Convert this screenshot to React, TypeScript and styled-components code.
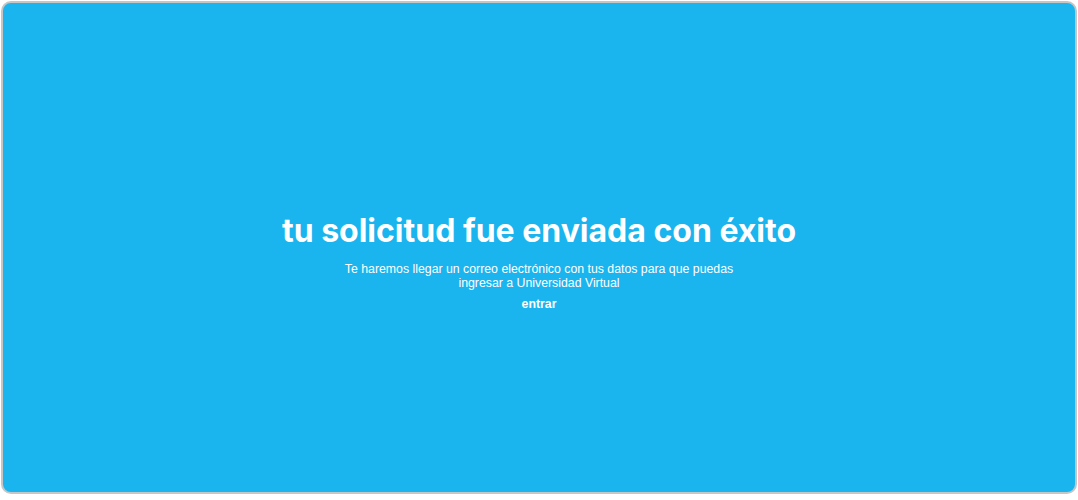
import React from "react";
import styled, { createGlobalStyle } from "styled-components";

const Global = createGlobalStyle`
  html, body { margin: 0; padding: 0; background: #ffffff; }
  * { box-sizing: border-box; }
`;

const Card = styled.main`
  margin: 1px;
  height: 493px;
  border: 2px solid #c6c6c6;
  border-radius: 10px;
  background: #1ab4ef;
  display: flex;
  flex-direction: column;
  align-items: center;
  padding-top: 206px;
  color: #ffffff;
`;

const Title = styled.h1`
  margin: 0;
  font-family: "Inter", sans-serif;
  font-weight: 700;
  font-size: 32px;
  line-height: 44px;
  letter-spacing: 0;
`;

const Message = styled.p`
  margin: 9px 0 0;
  max-width: 410px;
  text-align: center;
  font-family: "Liberation Sans", Arial, sans-serif;
  font-size: 12.3px;
  line-height: 14px;
`;

const Enter = styled.a`
  margin-top: 7px;
  font-family: "Liberation Sans", Arial, sans-serif;
  font-weight: 700;
  font-size: 12.3px;
  line-height: 14px;
  color: #ffffff;
  text-decoration: none;
  cursor: pointer;
`;

export default function App() {
  return (
    <>
      <Global />
      <Card>
        <Title>tu solicitud fue enviada con éxito</Title>
        <Message>
          Te haremos llegar un correo electrónico con tus datos para que puedas
          ingresar a Universidad Virtual
        </Message>
        <Enter>entrar</Enter>
      </Card>
    </>
  );
}
